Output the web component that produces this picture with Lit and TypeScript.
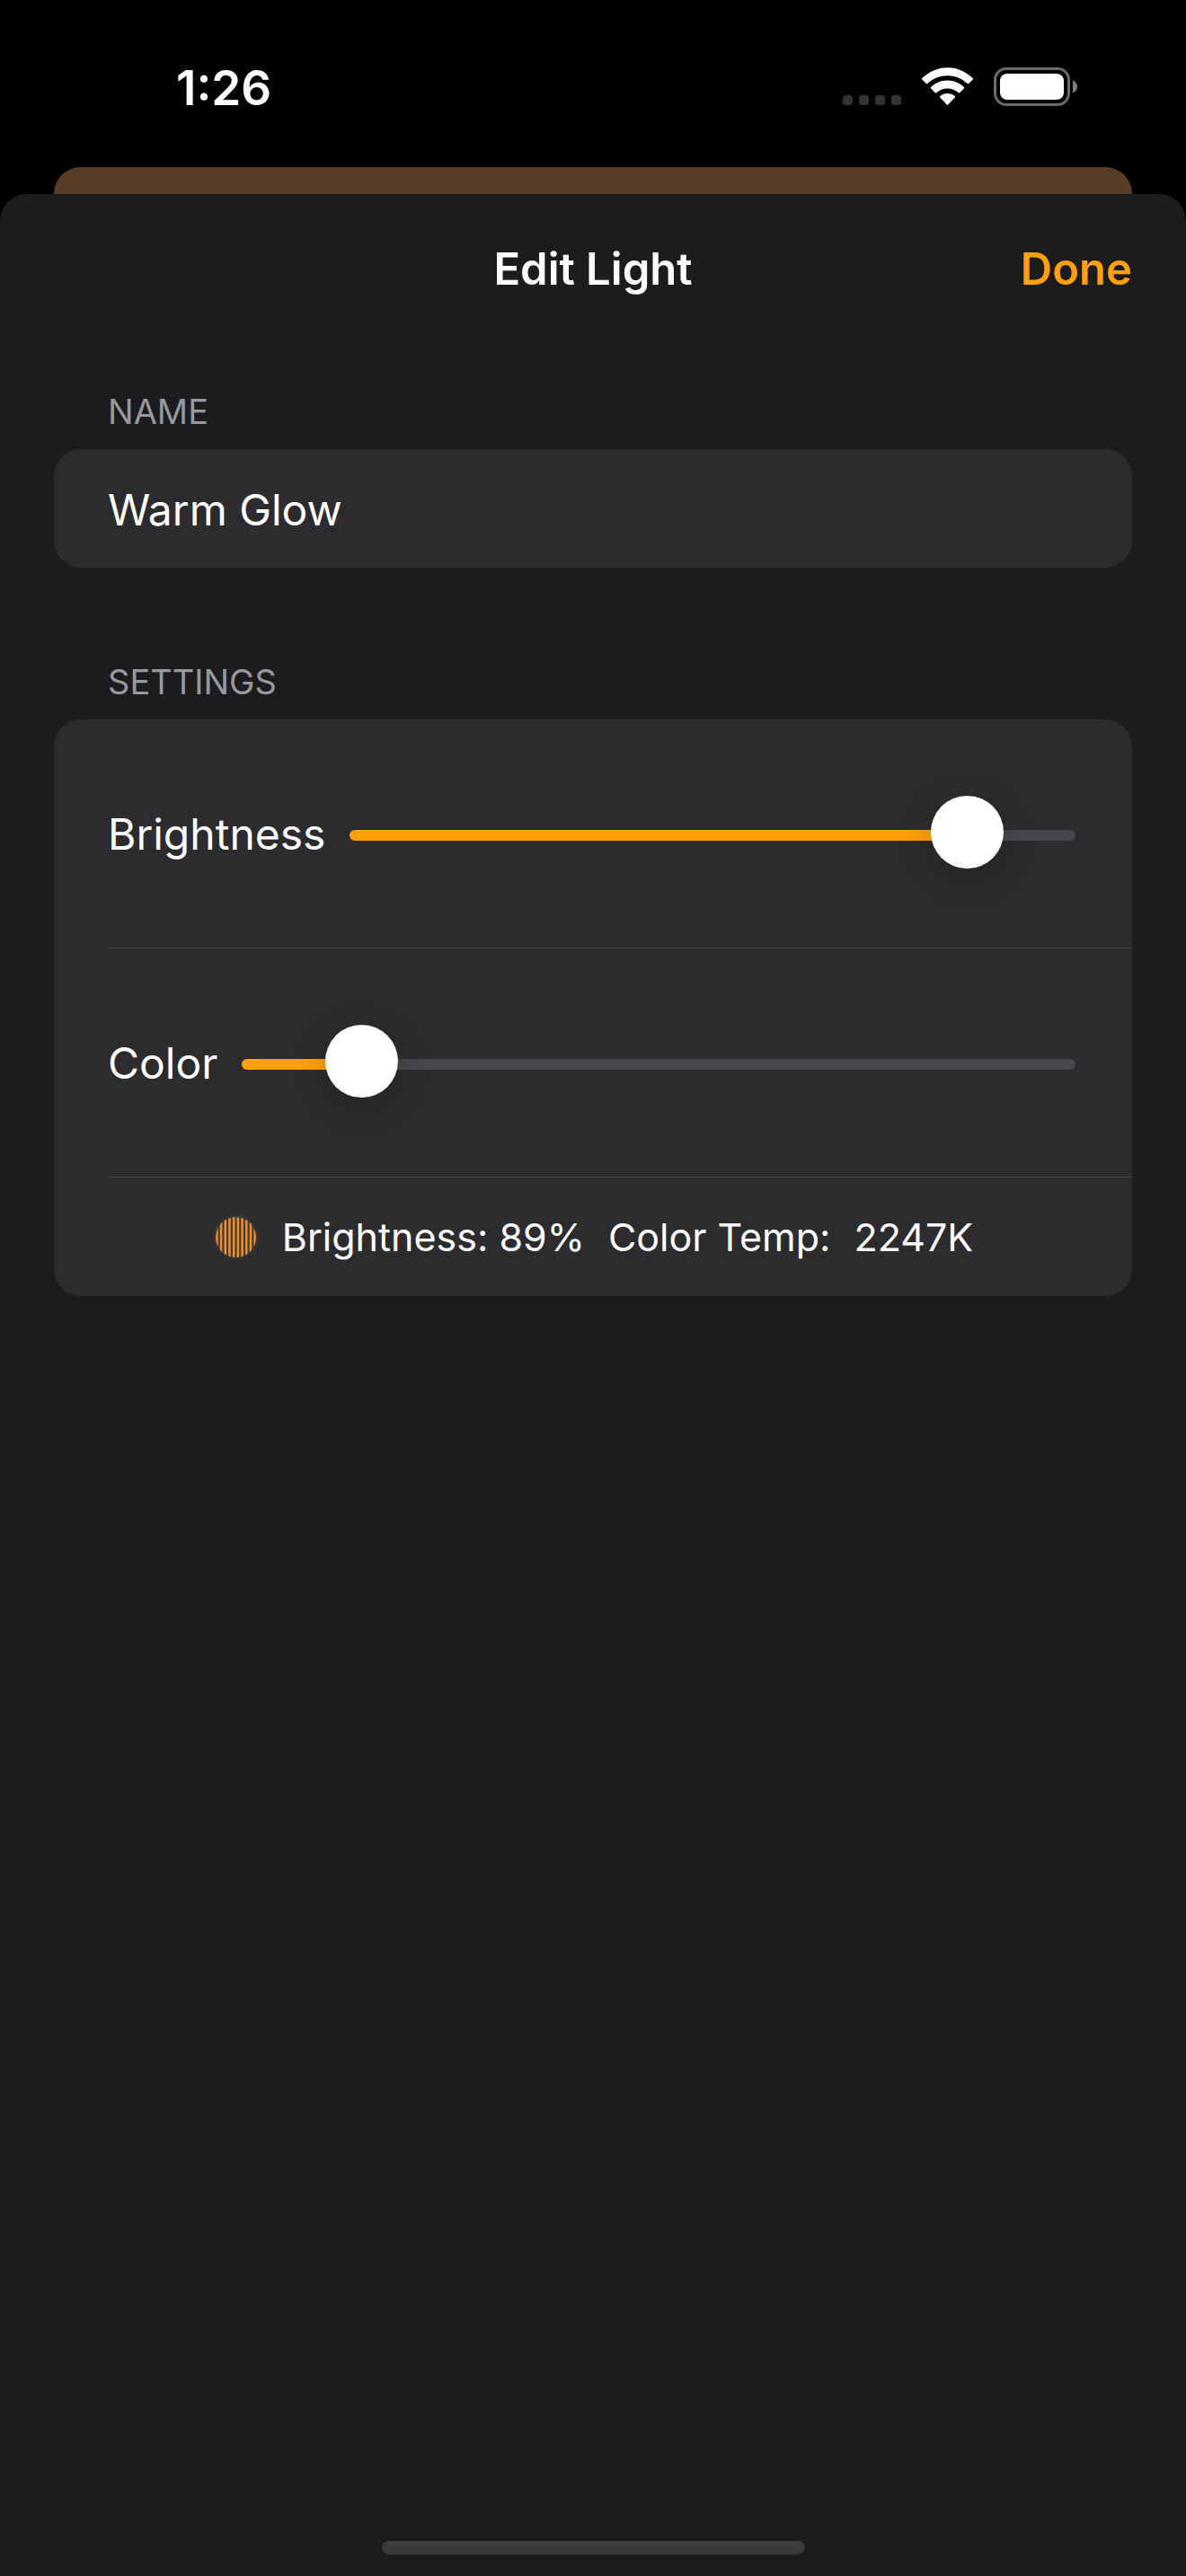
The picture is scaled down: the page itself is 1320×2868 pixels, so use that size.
import { LitElement, html, css, svg } from "lit";
import { customElement, property, state } from "lit/decorators.js";

@customElement("status-bar")
class StatusBar extends LitElement {
  static styles = css`
    :host {
      display: flex;
      align-items: center;
      justify-content: space-between;
      height: 186px;
      padding: 10px 120px 0 196px;
      box-sizing: border-box;
      color: #fff;
    }
    .time {
      font-size: 53px;
      font-weight: 600;
      line-height: 64px;
    }
    .icons {
      display: flex;
      align-items: flex-end;
      gap: 23px;
      padding-bottom: 3px;
    }
    .icons svg {
      display: block;
    }
  `;

  render() {
    return html`
      <time class="time">1:26</time>
      <div class="icons">
        <svg width="65" height="43" viewBox="0 0 65 43" aria-hidden="true">
          ${[0, 18, 36, 54].map(
            (x) => svg`<rect x=${x} y="31" width="11" height="11" rx="3.5" fill="#343434" />`
          )}
        </svg>
        <svg width="57" height="43" viewBox="0 0 57 43" fill="#fff" aria-hidden="true">
          <path d="M28.500 9.200c8.300 0 16.200 3.200 22.200 8.900.4.500 1 .5 1.500 0l4.500-4.500c.5-.4.500-1.100 0-1.500C49 4.600 39.100.2 28.500.2S8 4.600.3 12.100c-.4.400-.4 1.100 0 1.500l4.500 4.500c.5.500 1.100.5 1.500 0C12.300 12.400 20.200 9.200 28.500 9.200z" />
          <path d="M28.500 23.400c4.500 0 8.900 1.700 12.200 4.800.5.500 1.100.5 1.500 0l4.700-4.600c.5-.5.500-1.100 0-1.600-5-4.700-11.600-7.400-18.400-7.400S15.100 17.300 10.100 22c-.5.500-.5 1.100 0 1.600l4.700 4.600c.4.500 1 .5 1.500 0 3.300-3.100 7.700-4.800 12.200-4.800z" />
          <path d="M36.800 33.500c.5-.5.500-1.100 0-1.600-4.700-3.900-11.900-3.900-16.600 0-.5.500-.5 1.100 0 1.600l7.600 8.100c.4.400 1 .4 1.400 0z" />
        </svg>
        <svg width="94" height="43" viewBox="0 0 94 43" aria-hidden="true">
          <rect x="1.500" y="1.500" width="82" height="40" rx="12.500" fill="none" stroke="#6a6a6a" stroke-width="3" />
          <rect x="7" y="7" width="71" height="29" rx="8" fill="#fff" />
          <path d="M88 14.500c3 1.200 5 4 5 7s-2 5.800-5 7z" fill="#808080" />
        </svg>
      </div>
    `;
  }
}

@customElement("slider-row")
class SliderRow extends LitElement {
  @property() label = "";
  @property({ type: Number }) min = 0;
  @property({ type: Number }) max = 100;
  @property({ type: Number }) value = 0;

  static styles = css`
    :host {
      display: flex;
      align-items: center;
      gap: 27px;
      box-sizing: border-box;
      height: 255px;
      padding: 2px 63px 0 0;
    }
    .label {
      font-size: 48px;
      line-height: 64px;
    }
    .slider {
      --at: calc(40px + var(--fill) * (100% - 81px));
      appearance: none;
      flex: 1;
      min-width: 0;
      height: 84px;
      margin: 2px 0 0;
      background: none;
      outline: none;
    }
    .slider::-webkit-slider-runnable-track {
      height: 12px;
      border-radius: 6px;
      background: linear-gradient(to right, #ff9f0a var(--at), #48484c var(--at));
    }
    .slider::-webkit-slider-thumb {
      appearance: none;
      width: 81px;
      height: 81px;
      margin-top: -38px;
      border: 0;
      border-radius: 50%;
      background: #fff;
      box-shadow: 0 9px 36px rgba(0, 0, 0, 0.2);
    }
  `;

  private onInput(e: Event) {
    this.value = (e.target as HTMLInputElement).valueAsNumber;
    this.dispatchEvent(new CustomEvent("value-change", { detail: this.value }));
  }

  render() {
    const fill = (this.value - this.min) / (this.max - this.min);
    return html`
      <label class="label" for="range">${this.label}</label>
      <input
        class="slider"
        id="range"
        type="range"
        .min=${String(this.min)}
        .max=${String(this.max)}
        .value=${String(this.value)}
        style="--fill:${fill}"
        @input=${this.onInput}
      />
    `;
  }
}

@customElement("app-root")
class AppRoot extends LitElement {
  @state() private name = "Warm Glow";
  @state() private brightness = 89;
  @state() private temperature = 2247;

  static styles = css`
    :host {
      display: flex;
      flex-direction: column;
      min-height: 100vh;
      background: #000;
      color: #fff;
      font-family: Inter, "Liberation Sans", sans-serif;
    }
    .backdrop {
      height: 60px;
      margin: 0 60px -30px;
      border-radius: 30px 30px 0 0;
      background: #5a3c24;
    }
    .sheet {
      position: relative;
      flex: 1;
      display: flex;
      flex-direction: column;
      padding: 0 60px;
      border-radius: 30px 30px 0 0;
      background: #1c1c1e;
    }
    .header {
      display: grid;
      grid-template-columns: 1fr auto 1fr;
      align-items: center;
      height: 168px;
    }
    .title {
      grid-column: 2;
      margin: 0;
      font-size: 49px;
      font-weight: 600;
      line-height: 64px;
    }
    .done {
      justify-self: end;
      padding: 0;
      border: 0;
      background: none;
      color: #ff9f0a;
      font: inherit;
      font-size: 49px;
      font-weight: 600;
      line-height: 64px;
    }
    .caption {
      display: block;
      margin: 0;
      padding: 50px 60px 18px;
      color: #98989f;
      font-size: 38px;
      font-weight: 400;
      line-height: 48px;
    }
    .card {
      border-radius: 30px;
      background: #2c2c2e;
    }
    .field {
      display: block;
      box-sizing: border-box;
      width: 100%;
      height: 132px;
      padding: 2px 60px 0;
      border: 0;
      outline: none;
      color: #fff;
      font: inherit;
      font-size: 48px;
    }
    .group {
      margin-top: 53px;
    }
    .rows {
      padding-left: 60px;
    }
    .row {
      border-bottom: 1px solid #434346;
    }
    .summary {
      display: flex;
      align-items: center;
      justify-content: center;
      gap: 26px;
      height: 132px;
      padding-right: 60px;
      font-size: 43px;
      line-height: 56px;
      white-space: nowrap;
    }
    .swatch {
      display: block;
      width: 51px;
      height: 51px;
    }
    .home {
      width: 471px;
      height: 15px;
      margin: auto auto 24px;
      border-radius: 8px;
      background: linear-gradient(#3f3f3f, #363636);
    }
  `;

  render() {
    return html`
      <status-bar></status-bar>
      <div class="backdrop"></div>
      <main class="sheet">
        <header class="header">
          <h1 class="title">Edit Light</h1>
          <button class="done" type="button">Done</button>
        </header>
        <label class="caption" for="name">NAME</label>
        <input
          class="card field"
          id="name"
          type="text"
          .value=${this.name}
          @input=${(e: Event) => (this.name = (e.target as HTMLInputElement).value)}
        />
        <section class="group">
          <h2 class="caption">SETTINGS</h2>
          <div class="card rows">
            <slider-row
              class="row"
              label="Brightness"
              .value=${this.brightness}
              @value-change=${(e: CustomEvent) => (this.brightness = e.detail)}
            ></slider-row>
            <slider-row
              class="row"
              label="Color"
              .min=${1700}
              .max=${6700}
              .value=${this.temperature}
              @value-change=${(e: CustomEvent) => (this.temperature = e.detail)}
            ></slider-row>
            <div class="summary">
              <svg class="swatch" viewBox="0 0 51 51" aria-hidden="true">
                <clipPath id="disc"><circle cx="25.500" cy="25.500" r="22.500" /></clipPath>
                <circle cx="25.500" cy="25.500" r="25.500" fill="#333333" />
                <g clip-path="url(#disc)">
                  <rect width="51" height="51" fill="#40362c" />
                  ${Array.from(
                    { length: 10 },
                    (_, i) =>
                      svg`<rect x=${3.1 + i * 4.7} y="0" width="2.600" height="51" fill="#ee8f2e" />`
                  )}
                </g>
              </svg>
              <span>Brightness: ${this.brightness}%</span>
              <span>Color Temp:</span>
              <span>${this.temperature}K</span>
            </div>
          </div>
        </section>
        <div class="home"></div>
      </main>
    `;
  }
}
